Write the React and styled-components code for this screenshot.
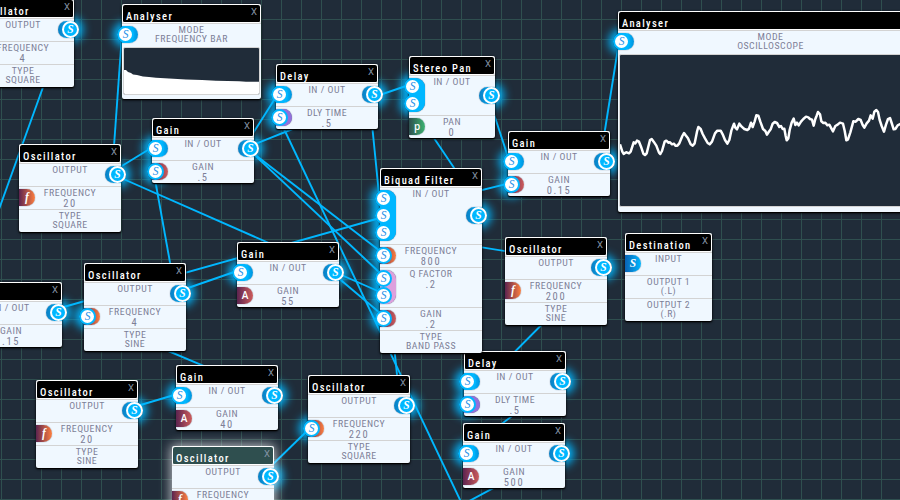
import React from "react";
import styled, { createGlobalStyle, css } from "styled-components";

const GlobalStyle = createGlobalStyle`
  body { margin: 0; background: #202c39; overflow: hidden; }
`;

const Canvas = styled.main`
  position: relative;
  isolation: isolate;
  width: 900px;
  height: 500px;
  overflow: hidden;
  background-color: #202c39;
  background-image:
    linear-gradient(to right, #2f4f4f 1px, transparent 1px),
    linear-gradient(to bottom, #2f4f4f 1px, transparent 1px);
  background-size: 20px 20px;
  background-position: 1px 19px;
  font-family: "Roboto Condensed", Roboto, sans-serif;
  font-stretch: 75%;
`;

const Cables = styled.svg`
  position: absolute;
  inset: 0;
  stroke: #00b7ff;
  stroke-width: 1.9;
`;

const NodeCard = styled.section`
  position: absolute;
  left: ${(p) => p.$x}px;
  top: ${(p) => p.$y}px;
  width: ${(p) => p.$w}px;
  background: aliceblue;
  border-radius: 2px;
  box-shadow: ${(p) =>
    p.$active ? "0 0 12px 1px rgba(255,255,255,.75)" : "0 1px 3px #000, 0 1px 1px #000"};
`;

const NodeHeader = styled.header`
  display: flex;
  justify-content: space-between;
  align-items: flex-start;
  box-sizing: border-box;
  height: 19px;
  padding: 0 3px;
  border: 1px solid #fff;
  border-radius: 3px 3px 2px 2px;
  background: ${(p) => (p.$active ? "#2f4f4f" : "#000")};
`;

const Title = styled.h2`
  margin: 0;
  padding-top: 4px;
  font-size: 10.5px;
  line-height: 15px;
  font-weight: 500;
  letter-spacing: 1.35px;
  color: #fff;
  white-space: nowrap;
`;

const Close = styled.button`
  all: unset;
  font-family: Roboto, sans-serif;
  font-size: 9.5px;
  font-stretch: 100%;
  line-height: 13px;
  color: #8795a8;
`;

const Row = styled.div`
  display: grid;
  grid-template-columns: 16px minmax(0, 1fr) 16px;
  grid-template-rows: minmax(0, 1fr);
  align-items: center;
  box-sizing: border-box;
  height: ${(p) => 6 + 17 * p.$slots}px;
  padding-bottom: 1px;
  border-top: 1px solid #d3d3d3;
  color: #7d7f97;
`;

const Caption = styled.div`
  grid-column: 2;
  grid-row: 1;
  align-self: start;
  padding-top: 1px;
  text-align: center;
`;

const Label = styled.div`
  font-size: 9.8px;
  line-height: 9px;
  letter-spacing: 0.5px;
  white-space: nowrap;
`;

const Value = styled.div`
  font-size: 10.5px;
  line-height: 13px;
  letter-spacing: 1.6px;
`;

const tones = {
  signal: "linear-gradient(to right, #0a63b5, #00b7ff)",
  linked: "linear-gradient(to right, #00b7ff 60%, #0093dd)",
  bus: "#00b7ff",
  freq: "linear-gradient(to right, #5c2450, #ff7f3f)",
  gain: "linear-gradient(to right, #5c2450, #cd5c5c)",
  time: "#9370db",
  q: "#dda0dd",
  pan: "linear-gradient(to right, #2f4f4f, #3cb371)",
};

const Socket = styled.div`
  grid-column: 1;
  grid-row: 1;
  display: flex;
  flex-direction: column;
  align-items: center;
  justify-content: center;
  height: ${(p) => 17 * p.$slots}px;
  border-radius: 0 9px 9px 0;
  background: ${(p) => tones[p.$tone]};
  box-shadow: 0 0 1px #456;
  color: #fff;
  ${(p) =>
    p.$out &&
    css`
      grid-column: 3;
      border-radius: 9px 0 0 9px;
      background: linear-gradient(to left, #00b7ff, #0a7fc4);
    `}
`;

const Glyph = styled.span`
  font: ${(p) =>
    p.$plain
      ? `600 10px/17px "Open Sans", sans-serif`
      : `italic bold 11.5px/17px "Liberation Serif", serif`};
`;

const Plug = styled.span`
  flex: none;
  position: relative;
  box-sizing: border-box;
  width: 17px;
  height: 17px;
  margin-left: ${(p) => (p.$out ? 9 : -9)}px;
  border: 2px solid ${(p) => (p.$out ? "#fff" : "#00b7ff")};
  border-radius: 50%;
  background: ${(p) => (p.$out ? "#00b7ff" : "#fff")};
  color: ${(p) => (p.$out ? "#fff" : "#1e90e8")};
  font: italic ${(p) => (p.$out ? "bold" : "normal")} 11.5px/13px "Liberation Serif", serif;
  text-align: center;

  &::before {
    content: "";
    position: absolute;
    inset: -2px;
    z-index: -1;
    border-radius: 50%;
    box-shadow: 0 0 10px 4px #00b7ff;
  }
`;

const Screen = styled.div`
  box-sizing: border-box;
  margin: 1px 1px 0;
  height: ${(p) => (p.$tall ? 153 : 48)}px;
  border: 1px solid #d3d3d3;
  border-radius: 2px;
  background: #202c39;
  overflow: hidden;

  svg { display: block; }
`;

const ScreenFrame = styled.div`
  display: flow-root;
  padding-bottom: ${(p) => (p.$tall ? 5 : 4)}px;
`;

const glyphs = { signal: "S", freq: "f", gain: "A", pan: "p" };

function Port({ tone, plugs = 0 }) {
  const slots = Math.max(plugs, 1);
  return (
    <Socket $tone={tone} $slots={slots}>
      {plugs === 0 && <Glyph $plain={tone === "gain" || tone === "pan"}>{glyphs[tone]}</Glyph>}
      {Array.from({ length: plugs }, (_, i) => <Plug key={i}>S</Plug>)}
    </Socket>
  );
}

function NodeRow({ label, sub, value, port, out, plugs = 0 }) {
  return (
    <Row $slots={Math.max(plugs, 1)}>
      {port && <Port tone={port} plugs={plugs} />}
      <Caption>
        <Label>{label}</Label>
        {sub && <Label>{sub}</Label>}
        {value && <Value>{value}</Value>}
      </Caption>
      {out && (
        <Socket $out $slots={1}>
          <Plug $out>S</Plug>
        </Socket>
      )}
    </Row>
  );
}

function AudioNode({ title, x, y, w = 102, active, rows, children }) {
  return (
    <NodeCard $x={x} $y={y} $w={w} $active={active}>
      <NodeHeader $active={active}>
        <Title>{title}</Title>
        <Close>X</Close>
      </NodeHeader>
      {rows.map((r, i) => <NodeRow key={i} {...r} />)}
      {children}
    </NodeCard>
  );
}

const osc = (freq, type, plugs = 0) => [
  { label: "OUTPUT", out: true },
  { label: "FREQUENCY", value: freq, port: "freq", plugs },
  { label: "TYPE", sub: type },
];
const io = (plugs = 1) => ({ label: "IN / OUT", port: plugs > 1 ? "bus" : "linked", plugs, out: true });
const gain = (v, plugs = 0) => [io(), { label: "GAIN", value: v, port: "gain", plugs }];
const delay = (v) => [io(), { label: "DLY TIME", value: v, port: "time", plugs: 1 }];

const nodes = [
  { title: "Oscillator", x: -28, y: -1, rows: osc("4", "SQUARE") },
  { title: "Oscillator", x: 19, y: 144, rows: osc("20", "SQUARE") },
  { title: "Gain", x: 152, y: 118, rows: gain(".5", 1) },
  { title: "Delay", x: 276, y: 64, rows: delay(".5") },
  { title: "Stereo Pan", x: 409, y: 56, w: 86, rows: [io(2), { label: "PAN", value: "0", port: "pan" }] },
  { title: "Gain", x: 508, y: 131, rows: gain("0.15", 1) },
  { title: "Oscillator", x: 505, y: 237, rows: osc("200", "SINE") },
  {
    title: "Destination", x: 625, y: 233, w: 87,
    rows: [
      { label: "INPUT", port: "signal" },
      { label: "OUTPUT 1", sub: "(.L)" },
      { label: "OUTPUT 2", sub: "(.R)" },
    ],
  },
  { title: "Gain", x: -40, y: 282, rows: gain(".15", 1) },
  { title: "Oscillator", x: 84, y: 263, rows: osc("4", "SINE", 1) },
  { title: "Gain", x: 237, y: 242, rows: gain("55") },
  { title: "Gain", x: 176, y: 365, rows: gain("40") },
  { title: "Oscillator", x: 36, y: 380, rows: osc("20", "SINE") },
  { title: "Oscillator", x: 308, y: 375, rows: osc("220", "SQUARE", 1) },
  { title: "Oscillator", x: 172, y: 446, active: true, rows: osc("20", "SINE") },
  { title: "Delay", x: 464, y: 351, rows: delay(".5") },
  { title: "Gain", x: 463, y: 423, rows: gain("500") },
  {
    title: "Biquad Filter", x: 380, y: 168,
    rows: [
      io(3),
      { label: "FREQUENCY", value: "800", port: "freq", plugs: 1 },
      { label: "Q FACTOR", value: ".2", port: "q", plugs: 2 },
      { label: "GAIN", value: ".2", port: "gain", plugs: 1 },
      { label: "TYPE", sub: "BAND PASS" },
    ],
  },
];

const cables = [
  [64, 29, -38, 312], [112, 174, 122, 34], [112, 172, 152, 147.5], [112, 174, 380, 292],
  [245, 146, 276, 97], [245, 148, 310, 122], [284, 129, 462, 504], [245, 147, 380, 251],
  [245, 146, 380, 273], [369, 94, 400, 405], [460, 506, 553, 456], [463, 453, 556, 383],
  [598, 268, 464, 403], [380, 231, 598, 266], [53, 310, 380, 218], [470, 193, 508, 183.7],
  [175, 292.5, 237, 271], [153.5, 171, 175.5, 293], [84, 315.5, 268, 393],
  [127, 409, 176, 394.5], [265, 472, 308, 430], [330, 271, 380, 313], [409, 101, 473, 196],
  [487, 93, 509, 160], [600, 161, 619, 42], [365, 100, 409, 85],
];

const spectrum =
  "M0 22 H2 L4 24 L7 25 L9 26.5 L13 27 L19 28.4 L25 29 L32 29.8 L45 30.4 L62 31.4 L78 32 L92 32.8 L115 33.2 L122 33.8 H135 V46 H0 Z";

const wave =
  "15,163 22,185 26,192 31,188 35,187 42,190 47,185 56,157 61,160 66,152 72,155 78,170 85,191 90,195 95,190 105,150 110,147 116,155 124,167 132,188 136,192 141,183 149,155 154,152 160,158 165,157 171,163 177,161 181,167 187,167 193,160 202,138 207,129 212,136 219,145 227,163 233,167 239,160 246,125 250,111 257,117 263,132 270,145 278,159 284,163 291,155 300,130 307,122 317,122 323,133 330,150 337,161 343,150 349,122 357,101 361,113 366,118 373,101 380,110 388,117 397,120 402,116 408,98 413,111 419,94 424,76 430,77 436,95 444,117 451,123 456,134 461,126 467,118 473,101 479,96 486,99 493,111 498,108 503,117 508,116 512,138 515,151 520,145 524,120 530,98 536,86 541,105 546,98 551,106 558,95 565,87 573,80 580,82 585,87 591,89 596,107 601,87 605,77 609,66 615,73 619,94 625,99 631,98 637,106 643,104 649,115 654,124 661,108 668,104 675,98 684,101 689,122 694,151 699,148 706,127 715,94 722,95 730,87 737,90 743,105 748,113 755,100 762,92 767,76 773,86 778,65 784,60 789,66 794,90 800,108 807,125 813,104 819,87 825,84 830,99 836,118 841,117 848,106 858,101";

export default function App() {
  return (
    <Canvas>
      <GlobalStyle />
      <Cables width="900" height="500">
        {cables.map(([x1, y1, x2, y2], i) => (
          <line key={i} x1={x1} y1={y1} x2={x2} y2={y2} />
        ))}
      </Cables>
      {nodes.map((n, i) => <AudioNode key={i} {...n} />)}
      <AudioNode
        title="Analyser" x={122} y={4} w={139}
        rows={[{ label: "MODE", sub: "FREQUENCY BAR", port: "linked", plugs: 1 }]}
      >
        <ScreenFrame>
          <Screen>
            <svg width="135" height="46"><path d={spectrum} fill="#fff" /></svg>
          </Screen>
        </ScreenFrame>
      </AudioNode>
      <AudioNode
        title="Analyser" x={618} y={11} w={305}
        rows={[{ label: "MODE", sub: "OSCILLOSCOPE", port: "linked", plugs: 1 }]}
      >
        <ScreenFrame $tall>
          <Screen $tall>
            <svg width="301" height="151" viewBox="15 -105 903 453">
              <polyline points={wave} fill="none" stroke="#fff" strokeWidth="7.5" strokeLinejoin="round" />
            </svg>
          </Screen>
        </ScreenFrame>
      </AudioNode>
    </Canvas>
  );
}
